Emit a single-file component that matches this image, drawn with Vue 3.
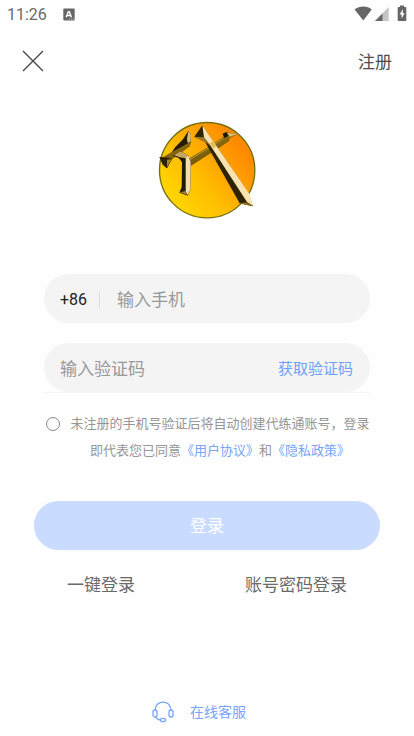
<script setup>
import { ref } from 'vue'

const phone = ref('')
const code = ref('')
const agreed = ref(false)
</script>

<template>
  <main class="page">
    <div class="status">
      <span class="time">11:26</span>
      <svg class="badge" width="12" height="13" viewBox="0 0 12 13" aria-hidden="true">
        <rect x="0.3" y="0.5" width="11.4" height="12" rx="1" fill="#666" />
        <path d="M3.2 9.3 5.4 3.6h.9l2.1 5.7M4 7.5h3.7" fill="none" stroke="#fff" stroke-width="1.4" />
        <path d="M6 11h1M8 11h1M9.8 11h1" stroke="#ddd" stroke-width="0.8" />
      </svg>
      <svg class="signals" width="54" height="18" viewBox="0 0 54 18" aria-hidden="true">
        <path d="M.6 4.5C5 .5 14 .5 17.7 4.500L9.300 15.500Z" fill="#666" />
        <path d="M34.700 2v14H21Z" fill="#c4c4c4" />
        <path d="M28.500 8.400V16H21Z" fill="#666" />
        <path d="M46 .4h4v1.500h1.500q.8 0 .8.8v12.500q0 .8-.8.800h-7q-.8 0-.8-.8V2.700q0-.8.8-.8H46Z" fill="#666" />
        <path d="M49 4 45.600 9.500h2V13.500l3-5.200h-1.900Z" fill="#fff" />
      </svg>
    </div>

    <header class="header">
      <button class="close" type="button" aria-label="关闭">
        <svg width="22" height="22" viewBox="0 0 22 22">
          <path d="M1 1 21 21M21 1 1 21" fill="none" stroke="#444" stroke-width="1.3" />
        </svg>
      </button>
      <a class="register" href="#">注册</a>
    </header>

    <svg class="logo" width="120" height="120" viewBox="0 0 360 360" role="img" aria-label="代练通">
      <defs>
        <linearGradient id="disc" x1="0.1" y1="0.85" x2="0.85" y2="0.25">
          <stop offset="0" stop-color="#ffd800" />
          <stop offset="0.4" stop-color="#ffc000" />
          <stop offset="1" stop-color="#ff8a00" />
        </linearGradient>
        <linearGradient id="bar" x1="0" y1="0" x2="0.5" y2="1">
          <stop offset="0" stop-color="#a07c1c" />
          <stop offset="1" stop-color="#6d5000" />
        </linearGradient>
      </defs>
      <circle cx="180.500" cy="180.500" r="143" fill="url(#disc)" stroke="#74700f" stroke-width="4" />
      <path d="M120 149 189 108 230 80 227 70 240 67 275 71 249 84 246 94 203 122 130 169Z" fill="url(#bar)" />
      <path d="M125 151 190 111 229 86" fill="none" stroke="#bd982f" stroke-width="3" />
      <path d="M227 71 239 66 245 77 232 84Z" fill="#1e1700" />
      <path d="M240 69 274 71 248 80Z" fill="#d9bd70" />
      <path d="M50 140 75 125 119 94 133 94 129 109 76 147 59 175 47 164 38 143Z" fill="url(#bar)" />
      <path d="M37 141 64 143 75 147 60 175 47 163Z" fill="#2b2100" />
      <path d="M60 149 75 148 60 171Z" fill="#a58633" />
      <path d="M124 63 131 73 130 96 103 111 74 127 85 111 108 88Z" fill="#241b00" />
      <path d="M124 64 132 74 130 95 122 99 120 86Z" fill="#d8bd78" />
      <path d="M78 137 100 124 123 135 131 154 130 241 122 257 97 248 104 231 105 157 96 145Z" fill="#211900" />
      <path d="M81 136 100 124 123 134 116 145 98 142Z" fill="#c5a65a" />
      <path d="M116 144 123 135 131 155 130 239 122 256 116 244Z" fill="#f2dfac" />
      <path d="M98 247 116 243 122 256Z" fill="#a37e2b" />
      <path d="M166 46 142 80 174 95 278 280 318 289 303 247 196 91Z" fill="#2f2400" />
      <path d="M166 46 198 93 307 251 318 288 300 276 191 108 171 82Z" fill="#f8e4b2" />
      <path d="M142 80 171 82 191 108 174 95Z" fill="#9b7b27" />
      <path d="M275 280 300 277 318 289Z" fill="#8e6a19" />
      <path d="M187 99 200 94 207 108 200 116Z" fill="#e4bd50" />
    </svg>

    <form class="form" @submit.prevent>
      <div class="fields">
        <div class="field">
          <label class="prefix" for="phone">+86</label>
          <input id="phone" v-model="phone" type="tel" placeholder="输入手机" />
        </div>
        <div class="code-row">
          <div class="field">
            <input id="code" v-model="code" type="text" placeholder="输入验证码" aria-label="验证码" />
            <button class="get-code" type="button">获取验证码</button>
          </div>
        </div>
      </div>

      <div class="agreement">
        <input id="agree" v-model="agreed" type="checkbox" />
        <div class="terms">
          <label for="agree">未注册的手机号验证后将自动创建代练通账号，登录</label>
          <div class="documents">
            <span>即代表您已同意</span><a href="#">《用户协议》</a><span>和</span><a href="#">《隐私政策》</a>
          </div>
        </div>
      </div>

      <button class="login" type="submit">登录</button>
      <nav class="alternatives">
        <a href="#">一键登录</a>
        <a href="#">账号密码登录</a>
      </nav>
    </form>

    <footer class="footer">
      <a class="support" href="#">
        <svg width="22" height="22" viewBox="0 0 22 22" fill="none" stroke="#76a5fa" stroke-width="1.3" aria-hidden="true">
          <path d="M3.200 9C3.200-1.500 18.800-1.500 18.800 9" />
          <rect x="1" y="9" width="4" height="7" rx="2" />
          <rect x="17" y="9" width="4" height="7" rx="2" />
          <path d="M3.500 16Q5 18.700 8.500 19" />
          <ellipse cx="11" cy="19" rx="2.500" ry="1.700" />
        </svg>
        <span>在线客服</span>
      </a>
    </footer>
  </main>
</template>

<style>
body {
  margin: 0;
  background: #fefefe;
}
</style>

<style scoped>
.page {
  display: flex;
  flex-direction: column;
  box-sizing: border-box;
  min-height: 100vh;
  background: #fefefe;
  color: #6a6a6a;
  font-family: Roboto, "Noto Sans CJK SC", sans-serif;
  font-size: 17px;
  line-height: 24px;
}

a {
  color: inherit;
  text-decoration: none;
}

button,
input {
  margin: 0;
  padding: 0;
  border: 0;
  background: none;
  color: inherit;
  font: inherit;
}

button {
  cursor: pointer;
}

.status {
  display: flex;
  align-items: center;
  height: 28px;
  padding: 0 6px 0 7px;
}

.time {
  padding-top: 2px;
  font-size: 16px;
}

.badge {
  margin-left: 16px;
}

.signals {
  margin-left: auto;
}

.header {
  display: flex;
  align-items: center;
  justify-content: space-between;
  height: 66px;
  padding: 0 22px;
}

.close {
  display: flex;
}

.register {
  padding-top: 2px;
  color: #4c4c4c;
}

.logo {
  align-self: center;
  margin-top: 16px;
}

.form {
  padding: 44px 34px 0;
}

.fields {
  display: grid;
  gap: 20px;
  padding: 0 10px;
}

.field {
  display: flex;
  box-sizing: border-box;
  align-items: center;
  height: 49px;
  padding: 2px 17px 0 16px;
  border-radius: 25px;
  background: #f4f4f4;
}

.field input {
  flex: 1;
  min-width: 0;
  outline: none;
}

.field input::placeholder {
  color: #999;
  opacity: 1;
}

.code-row {
  border-bottom: 1px solid #f4f4f4;
}

.prefix {
  margin-right: 17px;
  padding-right: 12px;
  border-right: 1px solid #ddd;
  color: #222;
  font-size: 16px;
  line-height: 16px;
}

.get-code {
  color: #6fa1fb;
  font-size: 15px;
}

.agreement {
  display: flex;
  align-items: flex-start;
  gap: 10px;
  margin-top: 17px;
  padding: 0 10px 0 12px;
  color: #969696;
  font-size: 13px;
  line-height: 27px;
}

.agreement input {
  flex: none;
  width: 14px;
  height: 14px;
  margin-top: 7px;
  border: 1px solid #888;
  border-radius: 50%;
  appearance: none;
}

.agreement input:checked {
  background: #6fa1fb;
}

.terms {
  flex: 1;
  text-align: center;
}

.terms label {
  display: block;
}

.documents {
  display: flex;
  flex-wrap: wrap;
  justify-content: center;
}

.agreement a {
  color: #76a5fa;
}

.login {
  display: block;
  width: 100%;
  height: 49px;
  margin-top: 37px;
  border-radius: 25px;
  background: #c9dcff;
  color: #fff;
}

.alternatives {
  display: flex;
  justify-content: space-between;
  margin-top: 23px;
  padding: 0 33px;
}

.footer {
  display: flex;
  justify-content: center;
  margin-top: auto;
  padding: 24px 0 12px;
}

.support {
  display: flex;
  align-items: center;
  gap: 16px;
  margin-right: 16px;
  color: #76a5fa;
  font-size: 14px;
}
</style>
